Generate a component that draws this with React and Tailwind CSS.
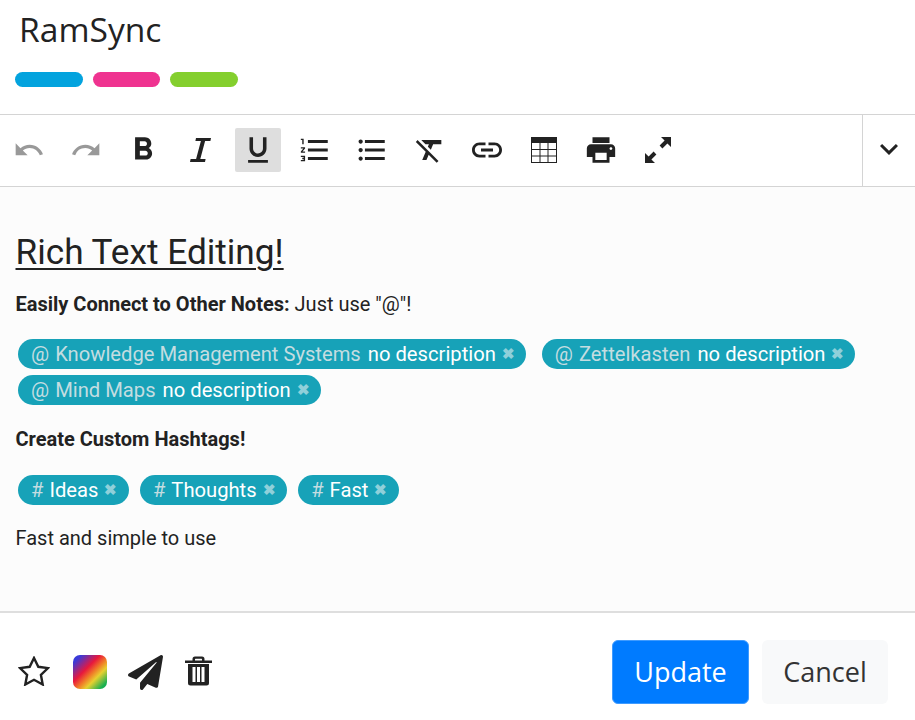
import React from "react";
import {
  MdUndo,
  MdRedo,
  MdFormatBold,
  MdFormatUnderlined,
  MdFormatListNumbered,
  MdFormatListBulleted,
  MdFormatClear,
  MdLink,
  MdPrint,
  MdKeyboardArrowDown,
} from "react-icons/md";
import { FaPaperPlane } from "react-icons/fa";

function ItalicIcon() {
  return (
    <svg width="24" height="24" viewBox="0 0 24 24" fill="#222">
      <path d="M7 0h15l-.6 3h-5.300l-4.800 18h5.300l-.6 3H1l.6-3h5.500l4.800-18H6.400z" />
    </svg>
  );
}

function TableIcon() {
  return (
    <svg width="26" height="26" viewBox="0 0 26 26">
      <rect x="0.5" y="0.5" width="25" height="25" fill="none" stroke="#222" />
      <rect x="0" y="0" width="26" height="6" fill="#222" />
      <path d="M9 6v20M17 6v20M0 12.500h26M0 19h26" stroke="#222" strokeWidth="1" fill="none" />
    </svg>
  );
}

function ExpandIcon() {
  return (
    <svg width="28" height="28" viewBox="0 0 28 28" fill="#222">
      <path d="M17 1h10v10l-3.600-3.600-5 5-2.800-2.800 5-5z" />
      <path d="M1 27V17l3.600 3.600 5-5 2.800 2.800-5 5L11 27z" />
    </svg>
  );
}

function StarIcon() {
  return (
    <svg width="32" height="30" viewBox="0 0 32 30">
      <path
        d="M16 2l4.300 8.800 9.700 1.300-7.100 6.700 1.800 9.700-8.700-4.700-8.700 4.700 1.800-9.700-7.100-6.700 9.700-1.300z"
        fill="none"
        stroke="#222"
        strokeWidth="2.400"
        strokeLinejoin="miter"
      />
    </svg>
  );
}

function TrashIcon() {
  return (
    <svg width="27" height="30" viewBox="0 0 27 30" fill="#222">
      <path d="M7.500 4.500V3A2.500 2.500 0 0 1 10 .5h7A2.500 2.500 0 0 1 19.500 3v1.500H27v2.500H0V4.500zm2.500 0h7V3.200a.4.4 0 0 0-.4-.4h-6.200a.4.4 0 0 0-.4.4z" />
      <path
        fillRule="evenodd"
        d="M3 8h21v19a2.500 2.500 0 0 1-2.500 2.500h-16A2.500 2.500 0 0 1 3 27zm4.500 3v15h3V11zm4.500 0v15h3V11zm4.500 0v15h3V11z"
      />
    </svg>
  );
}

function ToolBtn({ children, active }) {
  return (
    <div
      className={`flex h-[44px] w-[46px] items-center justify-center rounded-[2px] ${
        active ? "bg-[#dedede]" : ""
      }`}
    >
      {children}
    </div>
  );
}

function Tag({ prefix, name, desc }) {
  return (
    <span
      className={`inline-flex h-[30px] items-center rounded-full bg-[#17a2b8] pl-[13px] text-[20.2px] text-white ${
        desc ? "mr-[16px] pr-[11px]" : "mr-[11px] pr-[11.5px]"
      }`}
    >
      <span className="text-[#c4dde1]">{prefix}</span>
      <span className={`ml-[6px] ${desc ? "text-[#c4dde1]" : ""}`}>{name}</span>
      {desc && <span className="ml-[7px]">{desc}</span>}
      <span className="ml-[6px] text-[15px] font-bold text-[#8fd0da]">✖</span>
    </span>
  );
}

export default function App() {
  return (
    <div className="h-[720px] w-[915px] overflow-hidden bg-white font-['Roboto',sans-serif] text-[#222]">
      <div className="h-[114px] px-[15px] pt-[5px]">
        <h1 className="pl-[4px] font-['Open_Sans',sans-serif] text-[33.6px] leading-[48px] text-[#222]">
          RamSync
        </h1>
        <div className="mt-[19px] flex gap-[10px]">
          <div className="h-[15px] w-[67.5px] rounded-full bg-[#03a3de]" />
          <div className="h-[15px] w-[67.5px] rounded-full bg-[#ef3390]" />
          <div className="h-[15px] w-[67.5px] rounded-full bg-[#84cf2e]" />
        </div>
      </div>

      <div className="flex h-[73px] border-y border-[#d4d4d4]">
        <div className="flex flex-1 items-center gap-[11.2px] pb-[2px] pl-[6px] text-[32px]">
          <ToolBtn>
            <MdUndo className="text-[#999]" />
          </ToolBtn>
          <ToolBtn>
            <MdRedo className="text-[#999]" />
          </ToolBtn>
          <ToolBtn>
            <MdFormatBold className="text-[38px]" />
          </ToolBtn>
          <ToolBtn>
            <ItalicIcon />
          </ToolBtn>
          <ToolBtn active>
            <MdFormatUnderlined className="text-[34px]" />
          </ToolBtn>
          <ToolBtn>
            <MdFormatListNumbered className="text-[34px]" />
          </ToolBtn>
          <ToolBtn>
            <MdFormatListBulleted className="text-[34px]" />
          </ToolBtn>
          <ToolBtn>
            <MdFormatClear className="ml-[2px] text-[34px]" />
          </ToolBtn>
          <ToolBtn>
            <MdLink className="text-[36px]" />
          </ToolBtn>
          <ToolBtn>
            <TableIcon />
          </ToolBtn>
          <ToolBtn>
            <MdPrint className="text-[34px]" />
          </ToolBtn>
          <ToolBtn>
            <ExpandIcon />
          </ToolBtn>
        </div>
        <div className="flex w-[53px] items-center justify-center border-l border-[#d4d4d4] pb-[4px] text-[36px]">
          <MdKeyboardArrowDown />
        </div>
      </div>

      <div className="h-[426px] border-b-2 border-[#dedede] bg-[#fcfcfc] px-[15.5px] pt-[44px]">
        <h2 className="text-[35.2px] leading-[42px] underline decoration-[2px] underline-offset-[4px]">
          Rich Text Editing!
        </h2>
        <p className="mt-[18px] text-[20px] leading-[27px]">
          <strong className="font-bold">Easily Connect to Other Notes:</strong> Just use "@"!
        </p>
        <div className="mt-[21px] flex flex-wrap gap-y-[6px] pl-[2.5px]">
          <Tag prefix="@" name="Knowledge Management Systems" desc="no description" />
          <Tag prefix="@" name="Zettelkasten" desc="no description" />
          <Tag prefix="@" name="Mind Maps" desc="no description" />
        </div>
        <p className="mt-[21px] text-[20px] font-bold leading-[27px]">Create Custom Hashtags!</p>
        <div className="mt-[22px] flex pl-[2.5px]">
          <Tag prefix="#" name="Ideas" />
          <Tag prefix="#" name="Thoughts" />
          <Tag prefix="#" name="Fast" />
        </div>
        <p className="mt-[20px] text-[20px] leading-[27px]">Fast and simple to use</p>
      </div>

      <div className="flex items-center justify-between pl-[18px] pr-[27px] pt-[27px]">
        <div className="flex items-center">
          <div className="pb-[2px]">
            <StarIcon />
          </div>
          <div className="ml-[23px] h-[34px] w-[34px] rounded-[7px] bg-[linear-gradient(135deg,#3a3ad8_12%,#e8183c_40%,#f07a28_55%,#e8d030_68%,#18b050_90%)]" />
          <FaPaperPlane className="ml-[21px] text-[35px]" />
          <div className="ml-[22px] pb-[2px]">
            <TrashIcon />
          </div>
        </div>
        <div className="flex items-center gap-[13px] font-['Open_Sans',sans-serif] text-[27px]">
          <button className="h-[64px] w-[137px] rounded-[6px] border border-[#3f9bff] bg-[#007bff] text-white">
            Update
          </button>
          <button className="h-[64px] w-[126px] rounded-[6px] bg-[#f8f9fa] text-[#333]">
            Cancel
          </button>
        </div>
      </div>
    </div>
  );
}
